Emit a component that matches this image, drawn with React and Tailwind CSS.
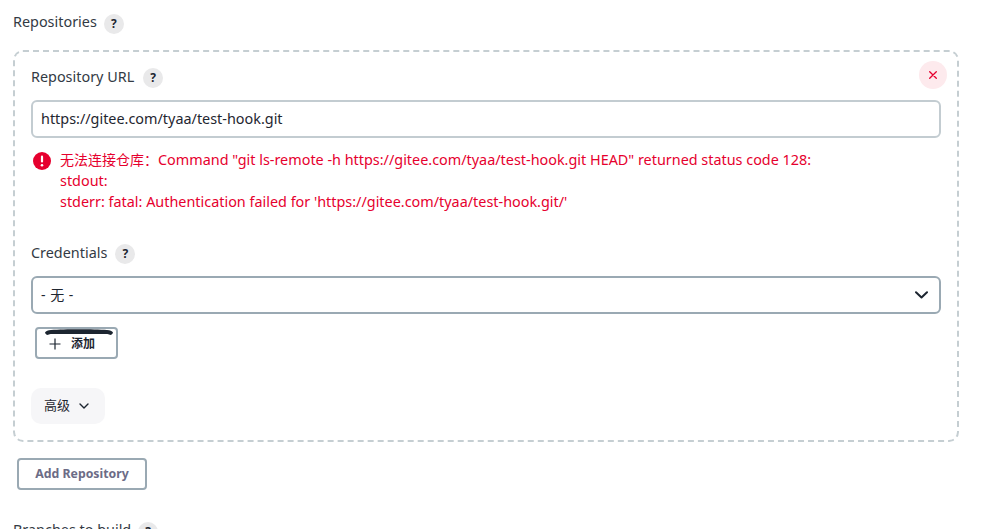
import React from "react";

function Help({ className = "" }) {
  return (
    <span className={`inline-flex h-5 w-5 shrink-0 items-center justify-center rounded-full bg-[#e9e9ea] text-[12px] font-bold leading-none text-[#1c2530] ${className}`}>
      ?
    </span>
  );
}

export default function App() {
  return (
    <div className="h-[529px] w-[989px] overflow-hidden bg-white font-['Noto_Sans','Noto_Sans_CJK_SC',sans-serif] text-[14.4px] text-[#333a44]">
      <div className="pl-[13px] pt-[12px]">
        <div className="flex h-[20px] items-center gap-[7px]">
          <span className="leading-[20px]">Repositories</span>
          <Help className="mt-[3px]" />
        </div>

        <div className="relative mt-[18px] h-[392px] w-[946px] rounded-[10px] border-2 border-dashed border-[#c5ced2] pl-[16px] pr-[16px] pt-[15px]">
          <button className="absolute right-[10px] top-[9px] flex h-[28px] w-[28px] items-center justify-center rounded-full bg-[#fdeaed]">
            <svg width="8" height="8" viewBox="0 0 8 8" fill="none" stroke="#e6002e" strokeWidth="1.3" strokeLinecap="round">
              <path d="M.7.7l6.6 6.6M7.3.7L.7 7.3" />
            </svg>
          </button>

          <div className="flex h-[20px] items-center gap-[9px]">
            <span className="leading-[20px]">Repository URL</span>
            <Help className="mt-[2px]" />
          </div>

          <div className="mt-[13px] flex h-[38px] w-[910px] items-center rounded-[6px] border-2 border-[#c3ccd1] pb-[1px] pl-[8px] text-[#1f2630]">
            https://gitee.com/tyaa/test-hook.git
          </div>

          <div className="ml-[2px] mt-[11px] flex gap-[9px] leading-[21px] text-[#e6002e]">
            <svg className="mt-[3px] shrink-0" width="18" height="18" viewBox="0 0 18 18">
              <circle cx="9" cy="9" r="9" fill="#e6002e" />
              <rect x="7.9" y="3.6" width="2.2" height="7" rx="1.1" fill="#fff" />
              <circle cx="9" cy="13.2" r="1.3" fill="#fff" />
            </svg>
            <div>
              <div><span className="text-[14px]">无法连接仓库：</span>Command "git ls-remote -h https://gitee.com/tyaa/test-hook.git HEAD" returned status code 128:</div>
              <div>stdout:</div>
              <div>stderr: fatal: Authentication failed for 'https://gitee.com/tyaa/test-hook.git/'</div>
            </div>
          </div>

          <div className="mt-[31px] flex h-[20px] items-center gap-[8px]">
            <span className="leading-[20px]">Credentials</span>
            <Help className="mt-[2px]" />
          </div>

          <div className="mt-[13px] flex h-[38px] w-[910px] items-center justify-between rounded-[6px] border-2 border-[#9aa9b3] pb-[2px] pl-[8px] pr-[11px] text-[#1f2630]">
            <span className="text-[14px] tracking-[0.5px]">- 无 -</span>
            <svg className="mt-[2px]" width="13" height="8" viewBox="0 0 13 8" fill="none" stroke="#1c2530" strokeWidth="2" strokeLinecap="round" strokeLinejoin="round">
              <path d="M1 1.2l5.5 5.3L12 1.2" />
            </svg>
          </div>

          <button className="relative ml-[4px] mt-[13px] flex h-[32px] w-[83px] items-center rounded-[4px] border-2 border-[#9aa9b3] pl-[12px] pt-[1px] text-[12px] font-semibold text-[#1c2530]">
            <svg className="absolute left-[8px] top-0" width="68" height="7" viewBox="0 0 68 7" fill="#1c2530">
              <path d="M0 3.4C1 1.9 3 1.3 6 .9 20 -.1 48 -.1 62 .9 65 1.3 67 1.9 68 3.4 67.6 5.2 66 6.2 64.8 5.8 64 5.3 63 5 61 5 48 5 20 5 7 5 5 5 4 5.3 3.2 5.8 2 6.2 .4 5.2 0 3.4Z" />
            </svg>
            <svg width="12" height="12" viewBox="0 0 12 12" fill="none" stroke="#1c2530" strokeWidth="1.2">
              <path d="M6 .5v11M.5 6h11" />
            </svg>
            <span className="ml-[10px]">添加</span>
          </button>

          <button className="mt-[29px] flex h-[36px] w-[74px] items-center rounded-[10px] bg-[#f6f6f8] pl-[13px] text-[13px] text-[#1f2630]">
            <span>高级</span>
            <svg className="ml-[9px]" width="10" height="7" viewBox="0 0 10 7" fill="none" stroke="#1c2530" strokeWidth="1.4" strokeLinecap="round" strokeLinejoin="round">
              <path d="M1 1l4 4 4-4" />
            </svg>
          </button>
        </div>

        <button className="ml-[4px] mt-[16px] flex h-[32px] w-[130px] items-center justify-center rounded-[4px] border-2 border-[#9aa9b3] text-[12.3px] font-bold text-[#6c6c86]">
          Add Repository
        </button>

        <div className="mt-[30px] flex h-[20px] items-center gap-[7px]">
          <span className="leading-[20px]">Branches to build</span>
          <Help className="mt-[4px]" />
        </div>
      </div>
    </div>
  );
}
